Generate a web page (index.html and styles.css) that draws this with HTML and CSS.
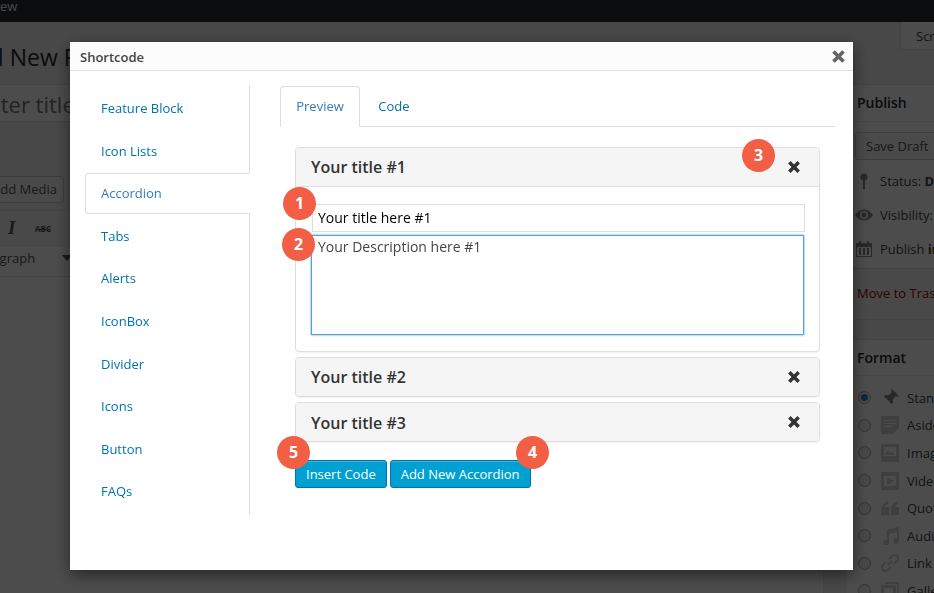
FILE: index.html
```html
<!DOCTYPE html>
<html lang="en">
<head>
    <meta charset="UTF-8">
    <meta name="viewport" content="width=device-width, initial-scale=1.0">
    <title>Shortcode</title>
    <link rel="stylesheet" href="styles.css">
</head>
<body>

<div class="adminbar"><span class="adminbar-text">View</span></div>

<!-- Post editor behind the dialog -->
<div class="page">
  <div class="main">
    <h1 class="page-title">Add New Post</h1>
    <div class="title-box">Enter title here</div>
    <div class="media-row"><span class="media-btn">Add Media</span></div>
    <div class="editor">
      <div class="toolbar">
        <span class="tool-italic">I</span>
        <span class="tool-abc">ABC</span>
      </div>
      <div class="toolbar-format">
        <span class="format-select">Paragraph</span>
        <span class="format-arrow"></span>
      </div>
    </div>
  </div>

  <div class="side">
    <div class="screen-btn">Screen Options</div>

    <div class="side-box side-box-publish">
      <h3 class="side-head side-head-publish">Publish</h3>
      <div class="side-body">
        <span class="save-btn">Save Draft</span>
        <div class="side-row side-row-first">
          <svg class="side-icon" viewBox="0 0 18 16"><circle cx="9" cy="4" r="3.500"/><rect x="8" y="6" width="2" height="10"/></svg>
          <span>Status: <b>Draft</b></span>
        </div>
        <div class="side-row">
          <svg class="side-icon" viewBox="0 0 18 16"><path d="M0 8c2.500-3.500 5.500-5.500 9-5.500s6.500 2 9 5.500c-2.500 3.500-5.500 5.500-9 5.500S2.500 11.500 0 8zm9-4a4 4 0 1 0 0 8 4 4 0 0 0 0-8z"/><circle cx="9" cy="8" r="2.500"/></svg>
          <span>Visibility: <b>Public</b></span>
        </div>
        <div class="side-row">
          <svg class="side-icon" viewBox="0 0 18 16"><path d="M1 2h3V0h2v2h6V0h2v2h3v14H1zm1 4v9h14V6zm2 1h2v7H4zm4 0h2v7H8zm4 0h2v7h-2z"/></svg>
          <span>Publish <b>immediately</b></span>
        </div>
      </div>
      <div class="side-foot"><span class="trash-link">Move to Trash</span></div>
    </div>

    <div class="side-box">
      <h3 class="side-head">Format</h3>
      <div class="format-list">
        <label class="format-row">
          <input class="format-radio" type="radio" name="post_format" checked>
          <svg class="format-icon format-icon-dark" viewBox="0 0 18 18"><path d="M11 0l7 7-2 1-1-1-3 3 0 4-2 1-3-4-6 6-1 1 7-7-4-3 1-2 4 0 3-3-1-1z"/></svg>
          Standard
        </label>
        <label class="format-row">
          <input class="format-radio" type="radio" name="post_format">
          <svg class="format-icon" viewBox="0 0 18 18"><path d="M0 0h18v12l-6 6H0zm3 4v1h12V4zm0 3v1h12V7zm0 3v1h8v-1z" fill-rule="evenodd"/></svg>
          Aside
        </label>
        <label class="format-row">
          <input class="format-radio" type="radio" name="post_format">
          <svg class="format-icon" viewBox="0 0 18 18"><path d="M0 0h18v18H0zm3 3v9h12V3zm1 8l3-5 2 3 2-1 3 3z" fill-rule="evenodd"/></svg>
          Image
        </label>
        <label class="format-row">
          <input class="format-radio" type="radio" name="post_format">
          <svg class="format-icon" viewBox="0 0 18 18"><path d="M0 0h18v18H0zm3 4v10h12V4zm3 1l7 4-7 4z" fill-rule="evenodd"/></svg>
          Video
        </label>
        <label class="format-row">
          <input class="format-radio" type="radio" name="post_format">
          <svg class="format-icon" viewBox="0 0 18 18"><path d="M0 12c0-5 2-8 7-10v3c-2 1-3 2-3 3h4v8H0zm10 0c0-5 2-8 7-10v3c-2 1-3 2-3 3h4v8h-8z"/></svg>
          Quote
        </label>
        <label class="format-row">
          <input class="format-radio" type="radio" name="post_format">
          <svg class="format-icon" viewBox="0 0 18 18"><path d="M6 3l12-3v14a3 3 0 1 1-2-3V5L8 7v9a3 3 0 1 1-2-3z"/></svg>
          Audio
        </label>
        <label class="format-row">
          <input class="format-radio" type="radio" name="post_format">
          <svg class="format-icon format-icon-line" viewBox="0 0 18 18"><path d="M7 11l4-4M8 5l3-3a3 3 0 0 1 5 5l-3 3M10 13l-3 3a3 3 0 0 1-5-5l3-3"/></svg>
          Link
        </label>
        <label class="format-row">
          <input class="format-radio" type="radio" name="post_format">
          <svg class="format-icon" viewBox="0 0 18 18"><path d="M0 3h15v15H0zm3 3v9h9V6zM4 0h14v14h-2V2H4z" fill-rule="evenodd"/></svg>
          Gallery
        </label>
      </div>
    </div>
  </div>
</div>

<div class="overlay"></div>

<!-- Shortcode dialog -->
<div class="modal">
  <div class="modal-head">
    <span class="modal-title">Shortcode</span>
    <svg class="icon-close modal-close" viewBox="0 0 12 12"><path d="M2 2l8 8M10 2l-8 8"/></svg>
  </div>

  <div class="modal-body">
    <ul class="nav">
      <li class="nav-item"><a href="#">Feature Block</a></li>
      <li class="nav-item"><a href="#">Icon Lists</a></li>
      <li class="nav-item nav-active"><a href="#">Accordion</a></li>
      <li class="nav-item"><a href="#">Tabs</a></li>
      <li class="nav-item"><a href="#">Alerts</a></li>
      <li class="nav-item"><a href="#">IconBox</a></li>
      <li class="nav-item"><a href="#">Divider</a></li>
      <li class="nav-item"><a href="#">Icons</a></li>
      <li class="nav-item"><a href="#">Button</a></li>
      <li class="nav-item"><a href="#">FAQs</a></li>
    </ul>

    <div class="content">
      <div class="tabs">
        <a class="tab tab-active" href="#">Preview</a>
        <a class="tab" href="#">Code</a>
      </div>

      <div class="accordion">
        <div class="acc-item">
          <div class="acc-head">
            <span class="acc-title">Your title #1</span>
            <svg class="icon-close acc-close" viewBox="0 0 12 12"><path d="M2 2l8 8M10 2l-8 8"/></svg>
            <span class="badge badge-3">3</span>
          </div>
          <div class="acc-body">
            <input class="acc-input" type="text" value="Your title here #1">
            <textarea class="acc-text">Your Description here #1</textarea>
            <span class="badge badge-1">1</span>
            <span class="badge badge-2">2</span>
          </div>
        </div>

        <div class="acc-item">
          <div class="acc-head acc-head-closed">
            <span class="acc-title">Your title #2</span>
            <svg class="icon-close acc-close" viewBox="0 0 12 12"><path d="M2 2l8 8M10 2l-8 8"/></svg>
          </div>
        </div>

        <div class="acc-item">
          <div class="acc-head acc-head-closed">
            <span class="acc-title acc-title-last">Your title #3</span>
            <svg class="icon-close acc-close" viewBox="0 0 12 12"><path d="M2 2l8 8M10 2l-8 8"/></svg>
          </div>
        </div>
      </div>

      <div class="actions">
        <button class="btn" type="button">Insert Code</button>
        <button class="btn" type="button">Add New Accordion</button>
        <span class="badge badge-5">5</span>
        <span class="badge badge-4">4</span>
      </div>
    </div>
  </div>
</div>

</body>
</html>
```

FILE: styles.css
```css
/* Global styles */

* {
  box-sizing: border-box;
  margin: 0;
  padding: 0;
}

html, body {
  height: 593px;
  overflow: hidden;
}

body {
  font-family: "Open Sans", sans-serif;
  font-size: 13px;
  color: #444;
  background-color: #f1f1f1;
}

/* Admin bar */

.adminbar {
  height: 22px;
  background-color: #23282d;
  color: #eee;
  overflow: hidden;
}

.adminbar-text {
  display: block;
  margin-left: -11px;
  margin-top: -5px;
  line-height: 22px;
}

/* Post editor behind the dialog */

.page {
  display: flex;
  height: 571px;
  overflow: hidden;
}

.main {
  width: 824px;
  flex: none;
  margin-right: 21px;
}

.page-title {
  font-size: 23px;
  font-weight: 400;
  line-height: 30px;
  color: #23282d;
  margin: 20px 0 12px -39px;
  white-space: nowrap;
}

.title-box {
  height: 38px;
  margin-left: -33px;
  padding-left: 8px;
  font-size: 22px;
  line-height: 38px;
  color: #777;
  background-color: #fff;
  border-top: 1px solid #ddd;
  border-bottom: 1px solid #ddd;
  white-space: nowrap;
}

.media-row {
  margin-top: 54px;
  height: 26px;
}

.media-btn {
  display: block;
  width: 110px;
  height: 27px;
  margin-left: -46px;
  padding-left: 37px;
  line-height: 25px;
  background-color: #f7f7f7;
  border: 1px solid #ccc;
  border-radius: 3px;
  color: #555;
}

.editor {
  margin-top: 8px;
  height: 400px;
  background-color: #fff;
  border: 1px solid #e5e5e5;
  border-left: none;
}

.toolbar {
  display: flex;
  align-items: center;
  height: 35px;
  border-bottom: 1px solid #e5e5e5;
  background-color: #f5f5f5;
}

.tool-italic {
  margin-left: 8px;
  width: 24px;
  font-family: "Liberation Serif", serif;
  font-size: 19px;
  font-weight: 700;
  font-style: italic;
  color: #555;
}

.tool-abc {
  margin-left: 3px;
  font-size: 8px;
  font-weight: 700;
  color: #555;
  text-decoration: line-through;
}

.toolbar-format {
  display: flex;
  align-items: center;
  height: 31px;
  padding-bottom: 6px;
  border-bottom: 1px solid #e5e5e5;
  overflow: hidden;
}

.format-select {
  margin-left: -28px;
  width: 90px;
  color: #555;
}

.format-arrow {
  border-left: 5px solid transparent;
  border-right: 5px solid transparent;
  border-top: 6px solid #555;
}

/* Sidebar behind the dialog */

.side {
  width: 300px;
  flex: none;
}

.screen-btn {
  width: 120px;
  height: 28px;
  margin-left: 55px;
  margin-bottom: 34px;
  padding-left: 15px;
  line-height: 28px;
  background-color: #fff;
  border: 1px solid #ddd;
  border-top: none;
  white-space: nowrap;
}

.side-box {
  background-color: #fff;
  border: 1px solid #e5e5e5;
}

.side-box-publish {
  margin-bottom: 19px;
}

.side-head {
  height: 36px;
  padding-left: 11px;
  font-size: 14px;
  font-weight: 600;
  line-height: 36px;
  color: #23282d;
  border-bottom: 1px solid #eee;
}

.side-head-publish {
  height: 37px;
}

.side-body {
  padding: 10px 9px 0;
  height: 146px;
}

.save-btn {
  display: inline-block;
  height: 28px;
  padding: 0 10px;
  line-height: 26px;
  background-color: #f7f7f7;
  border: 1px solid #ccc;
  border-radius: 3px;
  color: #555;
}

.side-row {
  display: flex;
  align-items: center;
  gap: 7px;
  height: 34px;
  white-space: nowrap;
}

.side-row-first {
  margin-top: 4px;
}

.side-icon {
  width: 18px;
  height: 16px;
  fill: #82878c;
}

.side-foot {
  height: 51px;
  padding: 15px 0 0 11px;
  background-color: #f5f5f5;
  border-top: 1px solid #ddd;
}

.trash-link {
  color: #a00;
}

.format-list {
  padding-top: 8px;
}

.format-row {
  display: flex;
  align-items: center;
  height: 27.600px;
  padding-left: 12px;
  white-space: nowrap;
}

.format-radio {
  appearance: none;
  width: 13px;
  height: 13px;
  margin-right: 10px;
  border: 1px solid #aaa;
  border-radius: 50%;
  background-color: #f0f0f0;
}

.format-radio:checked {
  background: radial-gradient(circle, #1e8cbe 0 3px, #f0f0f0 4px);
}

.format-icon {
  width: 18px;
  height: 18px;
  margin-right: 8px;
  fill: #d4d4d4;
}

.format-icon-dark {
  fill: #82878c;
}

.format-icon-line {
  fill: none;
  stroke: #d4d4d4;
  stroke-width: 2;
}

.overlay {
  position: fixed;
  top: 0;
  left: 0;
  right: 0;
  bottom: 0;
  background-color: rgba(0, 0, 0, 0.7);
}

/* Dialog */

.modal {
  position: fixed;
  top: 42px;
  left: 70px;
  width: 783px;
  height: 528px;
  background-color: #fff;
  box-shadow: 0 5px 15px rgba(0, 0, 0, 0.5);
}

.modal-head {
  display: flex;
  justify-content: space-between;
  align-items: center;
  height: 29px;
  padding: 1px 7px 0 10px;
  background-color: #fcfcfc;
  border-bottom: 1px solid #ddd;
}

.modal-title {
  font-size: 13px;
  font-weight: 600;
  color: #444;
}

.icon-close {
  fill: none;
  stroke-width: 3;
}

.modal-close {
  width: 15px;
  height: 15px;
  stroke: #666;
}

.modal-body {
  display: flex;
  padding-top: 15px;
}

/* Left menu */

.nav {
  width: 180px;
  height: 428px;
  flex: none;
  list-style: none;
  margin-right: 30px;
  padding: 1px 0 0 15px;
  border-right: 1px solid #ddd;
}

.nav-item {
  height: 42.600px;
  padding-left: 16px;
  line-height: 42px;
}

.nav-item a {
  color: #0073aa;
  text-decoration: none;
}

.nav-active {
  width: 165px;
  height: 41px;
  margin: 1px -1px 0.600px 0;
  background-color: #fff;
  border: 1px solid #ddd;
  border-right-color: #fff;
  border-radius: 4px 0 0 4px;
  padding-left: 15px;
  line-height: 38px;
}

.nav-active a {
  color: #337ab7;
}

/* Tabs */

.content {
  width: 555px;
}

.tabs {
  display: flex;
  height: 41px;
  border-bottom: 1px solid #ddd;
}

.tab {
  width: 80px;
  height: 41px;
  padding-top: 11px;
  text-align: center;
  color: #0073aa;
  text-decoration: none;
}

.tab-active {
  padding-top: 10px;
  color: #337ab7;
  background-color: #fff;
  border: 1px solid #ddd;
  border-bottom-color: #fff;
  border-radius: 4px 4px 0 0;
}

.tab + .tab {
  width: 68px;
}

/* Accordion */

.accordion {
  width: 525px;
  margin: 20px 0 0 15px;
}

.acc-item {
  margin-bottom: 5px;
  background-color: #fff;
  border: 1px solid #ddd;
  border-radius: 4px;
  box-shadow: 0 1px 1px rgba(0, 0, 0, 0.05);
}

.acc-head {
  position: relative;
  display: flex;
  justify-content: space-between;
  align-items: center;
  height: 39px;
  padding: 0 18px 0 15px;
  background-color: #f5f5f5;
  border-bottom: 1px solid #ddd;
  border-radius: 3px 3px 0 0;
}

.acc-head-closed {
  height: 38px;
  border-bottom: none;
  border-radius: 3px;
}

.acc-title {
  font-size: 16px;
  font-weight: 600;
  color: #333;
}

.acc-title-last {
  padding-top: 1px;
}

.acc-close {
  width: 14px;
  height: 14px;
  stroke: #333;
}

.acc-body {
  position: relative;
  height: 164px;
  padding: 17px 15px 0;
}

.acc-input {
  display: block;
  width: 493px;
  height: 28px;
  margin-left: 1px;
  padding: 0 5px 2px;
  font-family: "Open Sans", sans-serif;
  font-size: 14px;
  color: #000;
  border: 1px solid #ddd;
  outline: none;
}

.acc-text {
  display: block;
  width: 493px;
  height: 100px;
  margin-top: 3px;
  padding: 0 6px;
  font-family: "Open Sans", sans-serif;
  font-size: 14px;
  line-height: 21px;
  color: #444;
  border: 1px solid #5b9dd9;
  box-shadow: 0 0 2px rgba(30, 140, 190, 0.8);
  outline: none;
  resize: none;
}

/* Buttons */

.actions {
  position: relative;
  display: flex;
  gap: 3px;
  margin: 18px 0 0 15px;
}

.btn {
  height: 28px;
  padding: 0 10px;
  font-family: "Open Sans", sans-serif;
  font-size: 13px;
  color: #fff;
  background-color: #00a0d2;
  border: 1px solid #0073aa;
  border-radius: 3px;
  box-shadow: inset 0 1px 0 rgba(120, 200, 230, 0.5);
}

/* Number badges */

.badge {
  position: absolute;
  width: 33px;
  height: 33px;
  font-size: 16px;
  font-weight: 700;
  line-height: 32px;
  text-align: center;
  color: #fff;
  background-color: #f25f45;
  border-radius: 50%;
}

.badge-1 {
  top: 0;
  left: -13px;
}

.badge-2 {
  top: 41px;
  left: -14px;
}

.badge-3 {
  top: -9px;
  left: 446px;
}

.badge-4 {
  top: -24px;
  left: 221px;
}

.badge-5 {
  top: -24px;
  left: -18px;
}
```
